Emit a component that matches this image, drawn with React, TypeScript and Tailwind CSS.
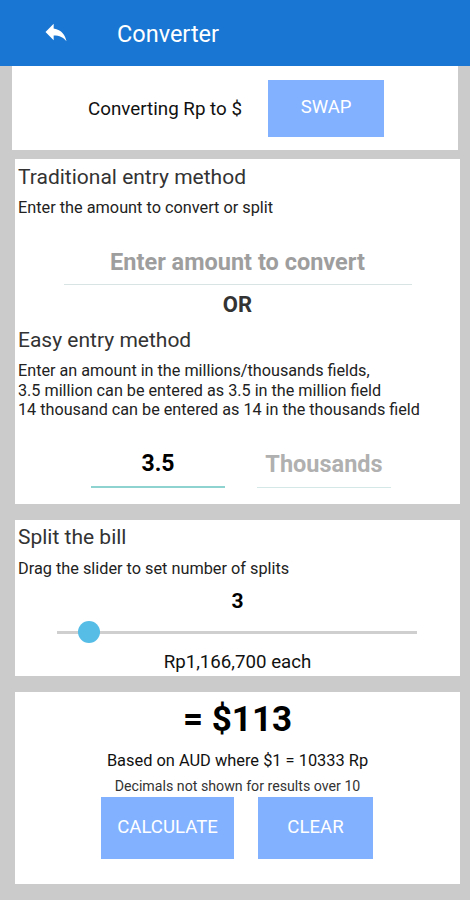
import React from "react";

function ReplyIcon() {
  return (
    <svg width="28" height="28" viewBox="0 0 24 24" fill="white">
      <path d="M10 9V5l-7 7 7 7v-4.1c5 0 8.5 1.6 11 5.1-1-5-4-10-11-11z" />
    </svg>
  );
}

export default function App() {
  return (
    <div
      className="w-[470px] h-[900px] bg-[#cbcbcb] overflow-hidden flex flex-col"
      style={{ fontFamily: "Roboto, 'Noto Sans', sans-serif" }}
    >
      {/* App bar */}
      <div className="h-[66px] bg-[#1976d2] flex items-center shrink-0">
        <div className="ml-[42px] mt-[-2px]">
          <ReplyIcon />
        </div>
        <span className="ml-[47px] mt-[3px] text-white text-[23.5px]">Converter</span>
      </div>

      {/* Direction card */}
      <div className="mx-[12px] h-[84px] bg-white flex items-center justify-center gap-[26px] pl-[2px]">
        <span className="text-[18.8px] text-[#111] mt-[3px]">Converting Rp to $</span>
        <button className="w-[116px] h-[57px] bg-[#82b1ff] text-white text-[18.5px]">
          SWAP
        </button>
      </div>

      {/* Entry card */}
      <div className="ml-[15px] mr-[10px] mt-[9px] h-[345px] bg-white px-[3px] pt-[5px] text-[#222]">
        <div className="text-[21px] leading-[26px] text-[#333]">Traditional entry method</div>
        <div className="text-[16.3px] leading-[20px] mt-[8px]">Enter the amount to convert or split</div>
        <div className="mt-[27px] mx-auto w-[348px] border-b border-[#d8e3e3] text-center pb-[4px]">
          <span className="text-[23.5px] font-bold text-[#9e9e9e]">Enter amount to convert</span>
        </div>
        <div className="text-center text-[22px] font-bold text-[#333] leading-[28px] mt-[6px]">OR</div>
        <div className="text-[21px] leading-[26px] text-[#333] mt-[8px]">Easy entry method</div>
        <div className="text-[16.2px] leading-[19.5px] mt-[8px]">
          Enter an amount in the millions/thousands fields,
          <br />
          3.5 million can be entered as 3.5 in the million field
          <br />
          14 thousand can be entered as 14 in the thousands field
        </div>
        <div className="flex mt-[27px] pl-[73px] gap-[32px]">
          <div className="w-[134px] border-b-2 border-[#8fd3d0] text-center pb-[5px]">
            <span className="text-[23px] font-bold text-black">3.5</span>
          </div>
          <div className="w-[134px] border-b border-[#d4e8e8] text-center pb-[5px]">
            <span className="text-[23.5px] font-bold text-[#b0b0b0]">Thousands</span>
          </div>
        </div>
      </div>

      {/* Split card */}
      <div className="ml-[15px] mr-[10px] mt-[16px] h-[156px] bg-white px-[3px] pt-[4px] text-[#222]">
        <div className="text-[21px] leading-[26px] text-[#333]">Split the bill</div>
        <div className="text-[16.3px] leading-[20px] mt-[9px]">Drag the slider to set number of splits</div>
        <div className="text-center text-[21px] font-bold text-black leading-[26px] mt-[9px]">3</div>
        <div className="relative ml-[39px] w-[360px] h-[24px] mt-[6px] flex items-center">
          <div className="w-full h-[3px] bg-[#cfcfcf]" />
          <div className="absolute left-[21px] top-[1px] w-[22px] h-[22px] rounded-full bg-[#55bde6]" />
        </div>
        <div className="text-center text-[18.7px] leading-[22px] mt-[7px] text-[#111]">Rp1,166,700 each</div>
      </div>

      {/* Result card */}
      <div className="ml-[15px] mr-[10px] mt-[16px] h-[192px] bg-white flex flex-col items-center pt-[8px]">
        <div className="text-[35px] font-bold text-black leading-[40px]">= $113</div>
        <div className="text-[16.4px] text-[#111] leading-[20px] mt-[11px]">Based on AUD where $1 = 10333 Rp</div>
        <div className="text-[14.2px] text-[#333] leading-[18px] mt-[6px]">Decimals not shown for results over 10</div>
        <div className="flex gap-[24px] mt-[2px] ml-[-1px]">
          <button className="w-[133px] h-[62px] bg-[#82b1ff] text-white text-[18.6px]">CALCULATE</button>
          <button className="w-[115px] h-[62px] bg-[#82b1ff] text-white text-[18.6px]">CLEAR</button>
        </div>
      </div>
    </div>
  );
}
